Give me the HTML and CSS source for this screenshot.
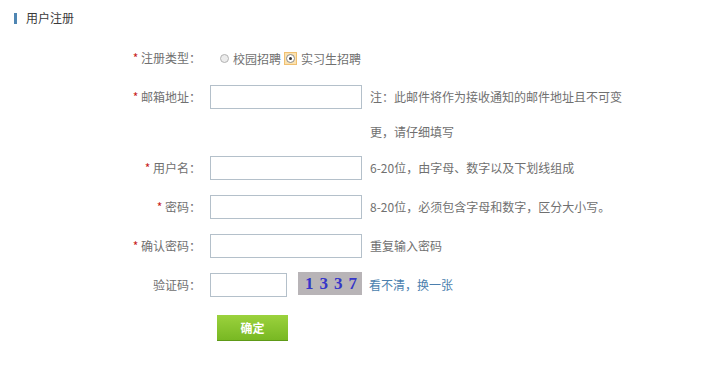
FILE: index.html
```html
<!DOCTYPE html>
<html lang="zh-CN">
<head>
    <meta charset="UTF-8">
    <meta name="viewport" content="width=device-width, initial-scale=1.0">
    <title>用户注册</title>
    <link rel="stylesheet" href="styles.css">
</head>
<body>
    <div class="page-title">
        <span class="title-bar"></span>
        <span class="title-text">用户注册</span>
    </div>

    <form class="reg-form">
        <div class="form-row">
            <label class="form-label"><span class="required">*</span> 注册类型：</label>
            <div class="radio-group">
                <span class="radio"></span>
                <span class="radio-text">校园招聘</span>
                <span class="radio-wrap"><span class="radio checked"></span></span>
                <span class="radio-text">实习生招聘</span>
            </div>
        </div>

        <div class="form-row row-email">
            <label class="form-label"><span class="required">*</span> 邮箱地址：</label>
            <input type="text" class="text-input">
            <div class="tip tip-long">注：此邮件将作为接收通知的邮件地址且不可变更，请仔细填写</div>
        </div>

        <div class="form-row">
            <label class="form-label"><span class="required">*</span> 用户名：</label>
            <input type="text" class="text-input">
            <div class="tip">6-20位，由字母、数字以及下划线组成</div>
        </div>

        <div class="form-row">
            <label class="form-label"><span class="required">*</span> 密码：</label>
            <input type="password" class="text-input">
            <div class="tip">8-20位，必须包含字母和数字，区分大小写。</div>
        </div>

        <div class="form-row">
            <label class="form-label"><span class="required">*</span> 确认密码：</label>
            <input type="password" class="text-input">
            <div class="tip">重复输入密码</div>
        </div>

        <div class="form-row">
            <label class="form-label">验证码：</label>
            <input type="text" class="text-input code-input">
            <div class="captcha">1337</div>
            <a href="#" class="tip refresh-link">看不清，换一张</a>
        </div>

        <div class="submit-row">
            <button type="button" class="submit-btn">确定</button>
        </div>
    </form>
</body>
</html>
```

FILE: styles.css
```css
body {
    font-family: "Noto Sans CJK TC", "Noto Sans CJK SC", "Noto Sans", sans-serif;
    font-size: 12px;
    color: #707070;
    margin: 0;
    padding: 0;
    background-color: #fff;
}
.page-title {
    display: flex;
    align-items: center;
    padding: 12px 0 0 14px;
    height: 12px;
}
.title-bar {
    width: 3px;
    height: 11px;
    background-color: #4f86b3;
    margin-right: 9px;
}
.title-text {
    color: #3a3a3a;
    line-height: 12px;
}
.reg-form {
    margin-top: 22px;
}
.form-row {
    display: flex;
    align-items: flex-start;
    margin-bottom: 15px;
}
.row-email {
    margin-bottom: 7px;
}
.form-label {
    width: 201px;
    text-align: right;
    line-height: 24px;
    margin-right: 9px;
}
.required {
    color: #c81d1d;
}
.text-input {
    width: 146px;
    height: 22px;
    padding: 0 2px;
    margin: 0;
    border: 1px solid #b4c0ca;
    outline: none;
}
.code-input {
    width: 71px;
}
.tip {
    line-height: 24px;
    margin-left: 8px;
}
.tip-long {
    width: 258px;
    line-height: 35px;
    margin-top: -6px;
}
.radio-group {
    display: flex;
    align-items: center;
    height: 24px;
    margin-left: 10px;
}
.radio {
    display: inline-block;
    width: 7px;
    height: 7px;
    border: 1px solid #b3b3b3;
    border-radius: 50%;
    background: #ececec;
    position: relative;
}
.radio.checked {
    background: #fff;
    border-color: #8a8a8a;
}
.radio.checked::after {
    content: "";
    position: absolute;
    left: 2px;
    top: 2px;
    width: 3px;
    height: 3px;
    border-radius: 50%;
    background: #333;
}
.radio-wrap {
    display: flex;
    align-items: center;
    justify-content: center;
    width: 11px;
    height: 11px;
    background: #fbe2b0;
    border: 1px solid #f0c070;
    margin-left: 3px;
}
.radio-text {
    margin-left: 4px;
}
.captcha {
    width: 57px;
    height: 23px;
    margin-top: -1px;
    margin-left: 11px;
    padding-left: 7px;
    background-color: #b8b4b7;
    color: #3535c8;
    font-family: "Liberation Serif", serif;
    font-weight: bold;
    font-size: 17px;
    letter-spacing: 6px;
    line-height: 23px;
    white-space: nowrap;
    overflow: hidden;
}
.refresh-link {
    color: #4b7fae;
    text-decoration: none;
    margin-left: 7px;
}
.submit-row {
    margin-left: 217px;
    padding-top: 3px;
}
.submit-btn {
    width: 71px;
    height: 26px;
    border: none;
    border-bottom: 1px solid #5e9a17;
    border-radius: 0;
    background: linear-gradient(#9bd23d, #78b823);
    color: #fff;
    font-family: inherit;
    font-size: 12px;
    font-weight: bold;
    cursor: pointer;
    padding: 0;
}
.submit-btn:hover {
    background: #7fbf28;
}
```
